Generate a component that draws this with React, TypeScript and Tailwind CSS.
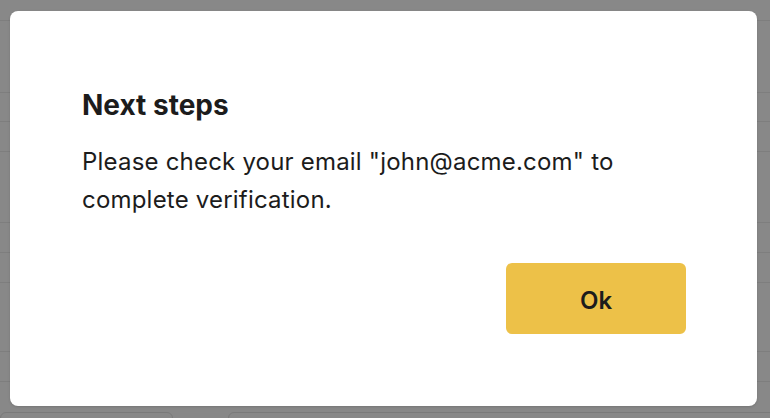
export default function App() {
  const rows = [20, 92, 121, 151, 222, 252, 282, 351, 381];
  return (
    <div className="relative h-[418px] w-[770px] overflow-hidden bg-[#888888] font-['Inter',sans-serif]">
      {/* faint table behind the overlay */}
      {rows.map(y => (
        <div key={y} className="absolute left-0 right-0 h-px bg-[#7e7e7e]" style={{ top: y }} />
      ))}
      <div className="absolute left-0 top-[412px] h-10 w-[173px] rounded-t-md border border-[#7a7a7a]" />
      <div className="absolute left-[228px] top-[412px] h-10 w-[560px] rounded-t-md border border-[#7a7a7a]" />

      {/* dialog */}
      <div className="absolute left-[10px] top-[11px] flex h-[395px] w-[747px] flex-col rounded-lg bg-white pb-[72px] pl-[72px] pr-[71px] pt-[77px] text-[#1c1c1c] shadow-sm">
        <h2 className="text-[28px] font-bold leading-[34px]">Next steps</h2>
        <p className="mt-[21px] text-2xl leading-[38px] tracking-[0.2px]">
          Please check your email "john@acme.com" to complete verification.
        </p>
        <div className="mt-auto flex justify-end">
          <button className="h-[71px] w-[180px] rounded-md bg-[#edc148] pt-1 text-2xl font-semibold text-[#1c1c1c]">
            Ok
          </button>
        </div>
      </div>
    </div>
  );
}
